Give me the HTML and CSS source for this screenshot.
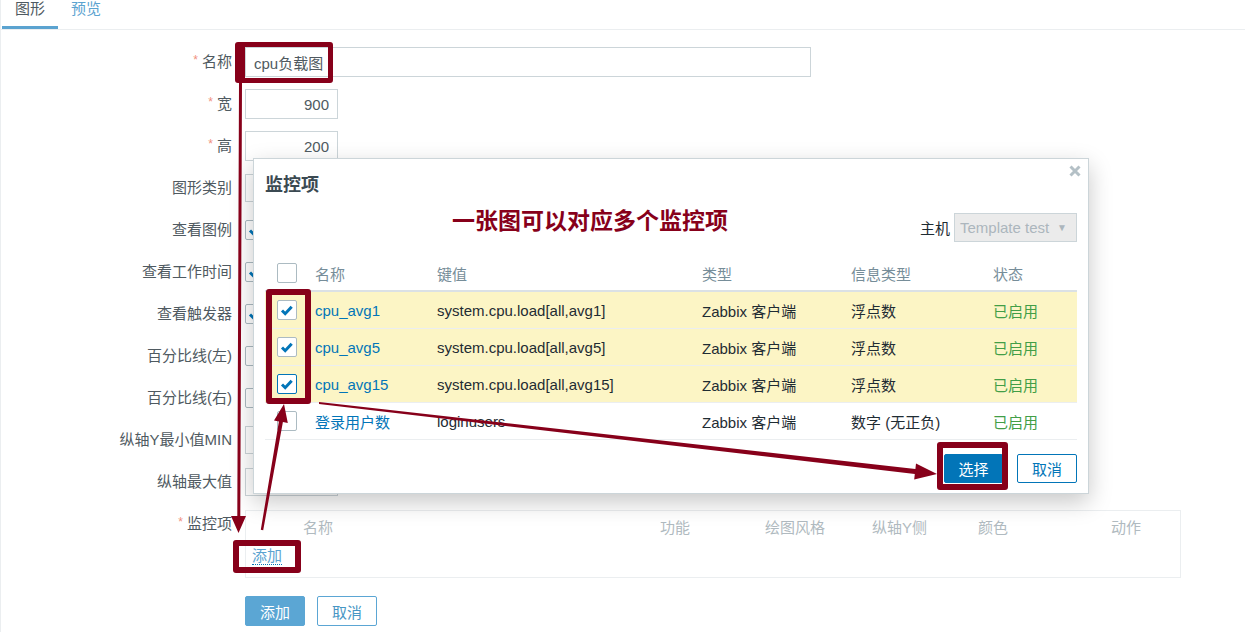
FILE: index.html
```html
<!DOCTYPE html>
<html>
  <head>
    <meta charset="UTF-8" />
    <title>图形</title>
    <link rel="stylesheet" href="styles.css">
  </head>
  <body>
    <div class="page">
      <ul class="tabs">
        <li class="tab active">图形</li>
        <li class="tab">预览</li>
      </ul>

      <div class="form">
        <div class="row">
          <label class="row-label required">名称</label>
          <div class="row-field"><input class="text name" value="cpu负载图" /></div>
        </div>
        <div class="row">
          <label class="row-label required">宽</label>
          <div class="row-field"><input class="text num" value="900" /></div>
        </div>
        <div class="row">
          <label class="row-label required">高</label>
          <div class="row-field"><input class="text num" value="200" /></div>
        </div>
        <div class="row">
          <label class="row-label">图形类别</label>
          <div class="row-field"><div class="select"></div></div>
        </div>
        <div class="row">
          <label class="row-label">查看图例</label>
          <div class="row-field">
            <span class="check"><svg viewBox="0 0 18 18"><path d="M4 9.5l3.2 3.2 6.5-7" /></svg></span>
          </div>
        </div>
        <div class="row">
          <label class="row-label">查看工作时间</label>
          <div class="row-field">
            <span class="check"><svg viewBox="0 0 18 18"><path d="M4 9.5l3.2 3.2 6.5-7" /></svg></span>
          </div>
        </div>
        <div class="row">
          <label class="row-label">查看触发器</label>
          <div class="row-field">
            <span class="check"><svg viewBox="0 0 18 18"><path d="M4 9.5l3.2 3.2 6.5-7" /></svg></span>
          </div>
        </div>
        <div class="row">
          <label class="row-label">百分比线(左)</label>
          <div class="row-field"><span class="check"></span></div>
        </div>
        <div class="row">
          <label class="row-label">百分比线(右)</label>
          <div class="row-field"><span class="check"></span></div>
        </div>
        <div class="row">
          <label class="row-label">纵轴Y最小值MIN</label>
          <div class="row-field"><div class="select short"></div></div>
        </div>
        <div class="row">
          <label class="row-label">纵轴最大值</label>
          <div class="row-field"><div class="select short"></div></div>
        </div>
        <div class="row top">
          <label class="row-label required">监控项</label>
          <div class="row-field">
            <div class="items">
              <div class="items-head">
                <span></span>
                <span>名称</span>
                <span>功能</span>
                <span>绘图风格</span>
                <span>纵轴Y侧</span>
                <span>颜色</span>
                <span>动作</span>
              </div>
              <div class="items-add"><a class="link-dotted">添加</a></div>
            </div>
          </div>
        </div>

        <div class="form-actions">
          <button class="btn primary">添加</button>
          <button class="btn">取消</button>
        </div>
      </div>
    </div>

    <div class="dialog">
      <div class="dialog-title">监控项</div>
      <svg class="dialog-close" viewBox="0 0 12 12"><path d="M1.5 1.5l9 9M10.5 1.5l-9 9" /></svg>

      <div class="dialog-filter">
        <span>主机</span>
        <div class="host-select"><span>Template test</span><span class="caret">▼</span></div>
      </div>

      <div class="grid">
        <div class="grid-row grid-head">
          <div class="cell-check"><span class="check"></span></div>
          <div>名称</div>
          <div>键值</div>
          <div>类型</div>
          <div>信息类型</div>
          <div>状态</div>
        </div>
        <div class="grid-row selected">
          <div class="cell-check"><span class="check"><svg viewBox="0 0 18 18"><path d="M4 9.5l3.2 3.2 6.5-7" /></svg></span></div>
          <div class="name">cpu_avg1</div>
          <div>system.cpu.load[all,avg1]</div>
          <div>Zabbix 客户端</div>
          <div>浮点数</div>
          <div class="on">已启用</div>
        </div>
        <div class="grid-row selected">
          <div class="cell-check"><span class="check"><svg viewBox="0 0 18 18"><path d="M4 9.5l3.2 3.2 6.5-7" /></svg></span></div>
          <div class="name">cpu_avg5</div>
          <div>system.cpu.load[all,avg5]</div>
          <div>Zabbix 客户端</div>
          <div>浮点数</div>
          <div class="on">已启用</div>
        </div>
        <div class="grid-row selected">
          <div class="cell-check"><span class="check focus"><svg viewBox="0 0 18 18"><path d="M4 9.5l3.2 3.2 6.5-7" /></svg></span></div>
          <div class="name">cpu_avg15</div>
          <div>system.cpu.load[all,avg15]</div>
          <div>Zabbix 客户端</div>
          <div>浮点数</div>
          <div class="on">已启用</div>
        </div>
        <div class="grid-row">
          <div class="cell-check"><span class="check"></span></div>
          <div class="name">登录用户数</div>
          <div>loginusers</div>
          <div>Zabbix 客户端</div>
          <div>数字 (无正负)</div>
          <div class="on">已启用</div>
        </div>
      </div>

      <div class="dialog-actions">
        <button class="btn solid">选择</button>
        <button class="btn outline">取消</button>
      </div>
    </div>

    <!-- annotations drawn over the screenshot -->
    <div class="note">一张图可以对应多个监控项</div>
    <svg class="marks" viewBox="0 0 1245 632">
      <path fill-rule="evenodd" d="M238 42h92a3 3 0 0 1 3 3v35a3 3 0 0 1-3 3h-92a3 3 0 0 1-3-3v-35a3 3 0 0 1 3-3z M245 47h83v31h-83z" />
      <path fill-rule="evenodd" d="M269 289h39a3 3 0 0 1 3 3v109a3 3 0 0 1-3 3h-39a3 3 0 0 1-3-3v-109a3 3 0 0 1 3-3z M272 295h33v103h-33z" />
      <path fill-rule="evenodd" d="M940 442h65a3 3 0 0 1 3 3v42a3 3 0 0 1-3 3h-65a3 3 0 0 1-3-3v-42a3 3 0 0 1 3-3z M943 448h59v36h-59z" />
      <path fill-rule="evenodd" d="M236 540h62a3 3 0 0 1 3 3v27a3 3 0 0 1-3 3h-62a3 3 0 0 1-3-3v-27a3 3 0 0 1 3-3z M239 546h56v21h-56z" />
      <polygon points="239,83 242,83 240.3,516 246,516 238.5,533 231,516 237.3,516" />
      <polygon points="260.8,529.8 263.2,530.2 282.9,422 287.8,422.9 284,404 274,420.5 278.9,421.4" />
      <polygon points="319,402 915.4,469 916,463.5 937,474 914.2,479.4 914.8,474 319,404" />
    </svg>
  </body>
</html>
```

FILE: styles.css
```css
html,
body {
  margin: 0;
  overflow: hidden;
}

body {
  position: relative;
  width: 1245px;
  height: 632px;
  background-color: #fff;
  color: #1f2c33;
  font-family: "Liberation Sans", "Noto Sans CJK SC", sans-serif;
  font-size: 15px;
}

.page {
  height: 632px;
  box-shadow: inset 1px 0 0 #ebeef0;
}

/* tabs */

.tabs {
  display: flex;
  margin: 0;
  padding: 0 0 0 2px;
  list-style: none;
  border-bottom: 1px solid #ebeef0;
}

.tab {
  box-sizing: border-box;
  height: 29px;
  padding: 0 13px;
  line-height: 18px;
  border-bottom: 3px solid transparent;
  color: #5ba3d0;
}

.tab.active {
  color: #4f5a61;
  border-bottom-color: #5ba3d0;
}

/* form */

.form {
  padding-top: 11px;
}

.row {
  display: grid;
  grid-template-columns: 232px 1fr;
  column-gap: 13px;
  align-items: center;
  padding: 6px 0;
}

.row.top {
  align-items: start;
}

.row-label {
  height: 30px;
  text-align: right;
  line-height: 30px;
  color: #4f5a61;
  white-space: nowrap;
}

.row-label.required::before {
  content: "*";
  margin-right: 4px;
  color: #f0907e;
  font-size: 12px;
  line-height: 0;
  vertical-align: 3px;
}

.row-field {
  display: flex;
  align-items: center;
  gap: 8px;
  min-height: 30px;
}

.text {
  box-sizing: border-box;
  height: 30px;
  margin: 0;
  padding: 0 8px;
  border: 1px solid #ccd5d9;
  background-color: #fff;
  color: #4f5a61;
  font: inherit;
  outline: none;
}

.text.name {
  width: 566px;
}

.text.num {
  width: 93px;
  text-align: right;
}

.select {
  box-sizing: border-box;
  width: 160px;
  height: 28px;
  border: 1px solid #ccd5d9;
}

.select.short {
  width: 93px;
}

.check {
  display: inline-block;
  box-sizing: border-box;
  width: 20px;
  height: 20px;
  border: 1px solid #acbbc2;
  border-radius: 2px;
  background-color: #fff;
}

.check.focus {
  border-color: #0275b8;
}

.check svg {
  display: block;
  width: 18px;
  height: 18px;
  fill: none;
  stroke: #0275b8;
  stroke-width: 3;
}

.items {
  box-sizing: border-box;
  width: 936px;
  margin-top: 1px;
  padding-bottom: 10px;
  border: 1px solid #ebeef0;
}

.items-head {
  display: grid;
  grid-template-columns: 57px 357px 105px 107px 106px 133px 1fr;
  line-height: 34px;
  color: #b0bac0;
}

.items-add {
  padding-left: 6px;
  line-height: 22px;
}

.link-dotted {
  color: #5ba3d0;
  border-bottom: 1px dotted #0275b8;
}

.form-actions {
  display: flex;
  gap: 12px;
  margin-top: 12px;
  padding-left: 245px;
}

.btn {
  box-sizing: border-box;
  width: 60px;
  height: 30px;
  padding: 0;
  border: 1px solid #5ba6d4;
  border-radius: 2px;
  background-color: #fff;
  color: #4796c4;
  font: inherit;
  cursor: pointer;
}

.btn.primary {
  background-color: #5ba6d4;
  color: #fff;
}

/* item picker dialog */

.dialog {
  position: absolute;
  left: 253px;
  top: 158px;
  box-sizing: border-box;
  width: 836px;
  height: 336px;
  padding: 0 11px;
  border: 1px solid #ccd5d9;
  background-color: #fff;
  box-shadow: 0 8px 22px rgba(0, 0, 0, 0.22);
}

.dialog-title {
  padding-top: 13px;
  line-height: 26px;
  font-size: 18px;
  font-weight: bold;
  color: #3b4a52;
}

.dialog-close {
  position: absolute;
  top: 6px;
  right: 7px;
  width: 12px;
  height: 12px;
  stroke: #b4c0c6;
  stroke-width: 3;
}

.dialog-filter {
  display: flex;
  justify-content: flex-end;
  align-items: center;
  gap: 4px;
  margin-top: 15px;
}

.host-select {
  display: flex;
  justify-content: space-between;
  box-sizing: border-box;
  width: 123px;
  height: 29px;
  padding: 0 9px 0 5px;
  border: 1px solid #ccd5d9;
  background-color: #ebebeb;
  line-height: 27px;
  color: #acb6bd;
}

.host-select .caret {
  font-size: 10px;
}

.grid {
  margin-top: 14px;
}

.grid-row {
  display: grid;
  grid-template-columns: 50px 122px 265px 149px 142px 1fr;
  align-items: center;
  height: 36px;
  border-bottom: 1px solid #ebeef0;
  white-space: nowrap;
}

.grid-head {
  height: 34px;
  border-bottom: 2px solid #dbe1e5;
  color: #768d99;
}

.grid-row.selected {
  background-color: #fcf5c5;
}

.cell-check {
  display: flex;
  padding-left: 12px;
}

.grid-row .name {
  color: #0275b8;
}

.grid-row .on {
  color: #429e47;
}

.dialog-actions {
  display: flex;
  justify-content: flex-end;
  gap: 14px;
  margin-top: 14px;
}

.btn.solid {
  width: 59px;
  height: 29px;
  border-color: #0275b8;
  background-color: #0275b8;
  color: #fff;
}

.btn.outline {
  height: 29px;
  border-color: #0275b8;
  color: #0275b8;
}

/* annotations */

.note {
  position: absolute;
  left: 452px;
  top: 207px;
  line-height: 28px;
  font-size: 23px;
  font-weight: bold;
  color: #87001a;
  white-space: nowrap;
}

.marks {
  position: absolute;
  left: 0;
  top: 0;
  width: 1245px;
  height: 632px;
  fill: #87001a;
  pointer-events: none;
}
```
